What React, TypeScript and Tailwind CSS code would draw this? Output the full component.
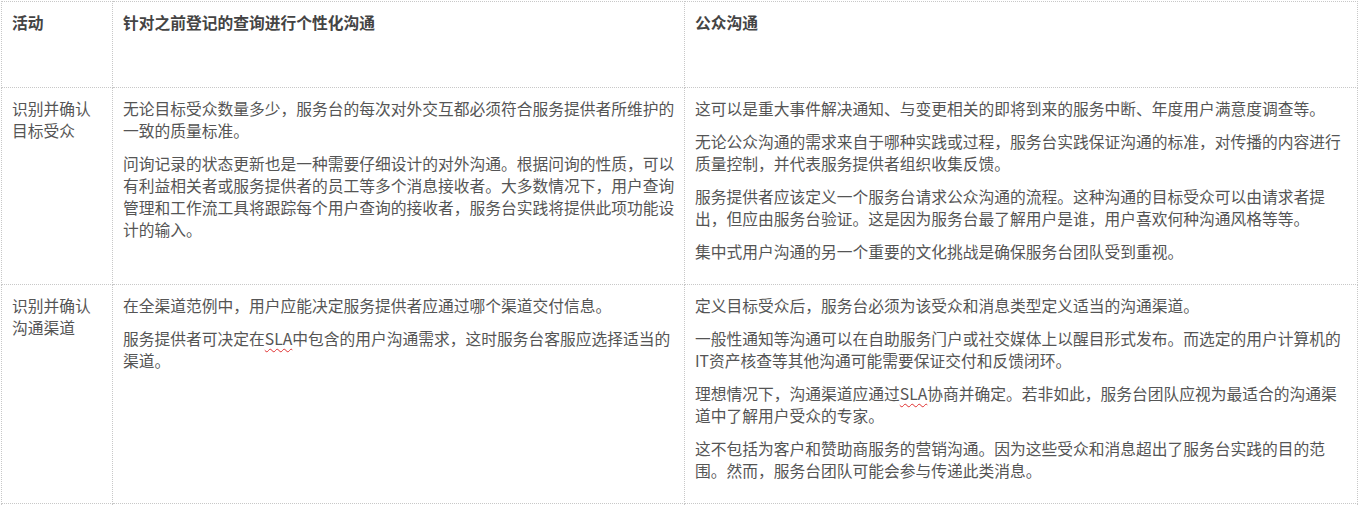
import React from "react";

const SLA = () => (
  <span className="underline decoration-wavy decoration-[#e03030] decoration-1 underline-offset-[3px]">SLA</span>
);

const P = ({ children }: { children: React.ReactNode }) => (
  <p className="mb-[11px]">{children}</p>
);

const td = "border border-dotted border-[#c8c8c8] align-top pl-[10px] pr-[9px] pt-[10px] pb-[10px]";
const th = "border border-dotted border-[#c8c8c8] align-top text-left font-bold text-[#444] pl-[10px] pr-[9px] pt-[10px] pb-[10px] h-[86px]";

export default function App() {
  return (
    <div className="bg-white w-[1359px] h-[505px] overflow-hidden pl-px pt-px font-['Noto_Sans_CJK_SC','Microsoft_YaHei',sans-serif] text-[15.75px] leading-[22px] text-[#555]">
      <table className="table-fixed border-collapse w-[1356px]">
        <colgroup>
          <col className="w-[111px]" />
          <col className="w-[572px]" />
          <col className="w-[673px]" />
        </colgroup>
        <thead>
          <tr>
            <th className={th}>活动</th>
            <th className={th}>针对之前登记的查询进行个性化沟通</th>
            <th className={th}>公众沟通</th>
          </tr>
        </thead>
        <tbody>
          <tr>
            <td className={td}>识别并确认目标受众</td>
            <td className={td}>
              <P>无论目标受众数量多少，服务台的每次对外交互都必须符合服务提供者所维护的一致的质量标准。</P>
              <P>问询记录的状态更新也是一种需要仔细设计的对外沟通。根据问询的性质，可以有利益相关者或服务提供者的员工等多个消息接收者。大多数情况下，用户查询管理和工作流工具将跟踪每个用户查询的接收者，服务台实践将提供此项功能设计的输入。</P>
            </td>
            <td className={td}>
              <P>这可以是重大事件解决通知、与变更相关的即将到来的服务中断、年度用户满意度调查等。</P>
              <P>无论公众沟通的需求来自于哪种实践或过程，服务台实践保证沟通的标准，对传播的内容进行质量控制，并代表服务提供者组织收集反馈。</P>
              <P>服务提供者应该定义一个服务台请求公众沟通的流程。这种沟通的目标受众可以由请求者提出，但应由服务台验证。这是因为服务台最了解用户是谁，用户喜欢何种沟通风格等等。</P>
              <P>集中式用户沟通的另一个重要的文化挑战是确保服务台团队受到重视。</P>
            </td>
          </tr>
          <tr>
            <td className={td}>识别并确认沟通渠道</td>
            <td className={td}>
              <P>在全渠道范例中，用户应能决定服务提供者应通过哪个渠道交付信息。</P>
              <P>服务提供者可决定在<SLA />中包含的用户沟通需求，这时服务台客服应选择适当的渠道。</P>
            </td>
            <td className={td}>
              <P>定义目标受众后，服务台必须为该受众和消息类型定义适当的沟通渠道。</P>
              <P>一般性通知等沟通可以在自助服务门户或社交媒体上以醒目形式发布。而选定的用户计算机的IT资产核查等其他沟通可能需要保证交付和反馈闭环。</P>
              <P>理想情况下，沟通渠道应通过<SLA />协商并确定。若非如此，服务台团队应视为最适合的沟通渠道中了解用户受众的专家。</P>
              <P>这不包括为客户和赞助商服务的营销沟通。因为这些受众和消息超出了服务台实践的目的范围。然而，服务台团队可能会参与传递此类消息。</P>
            </td>
          </tr>
          <tr>
            <td className={td + " h-[40px]"}></td>
            <td className={td}></td>
            <td className={td}></td>
          </tr>
        </tbody>
      </table>
    </div>
  );
}
